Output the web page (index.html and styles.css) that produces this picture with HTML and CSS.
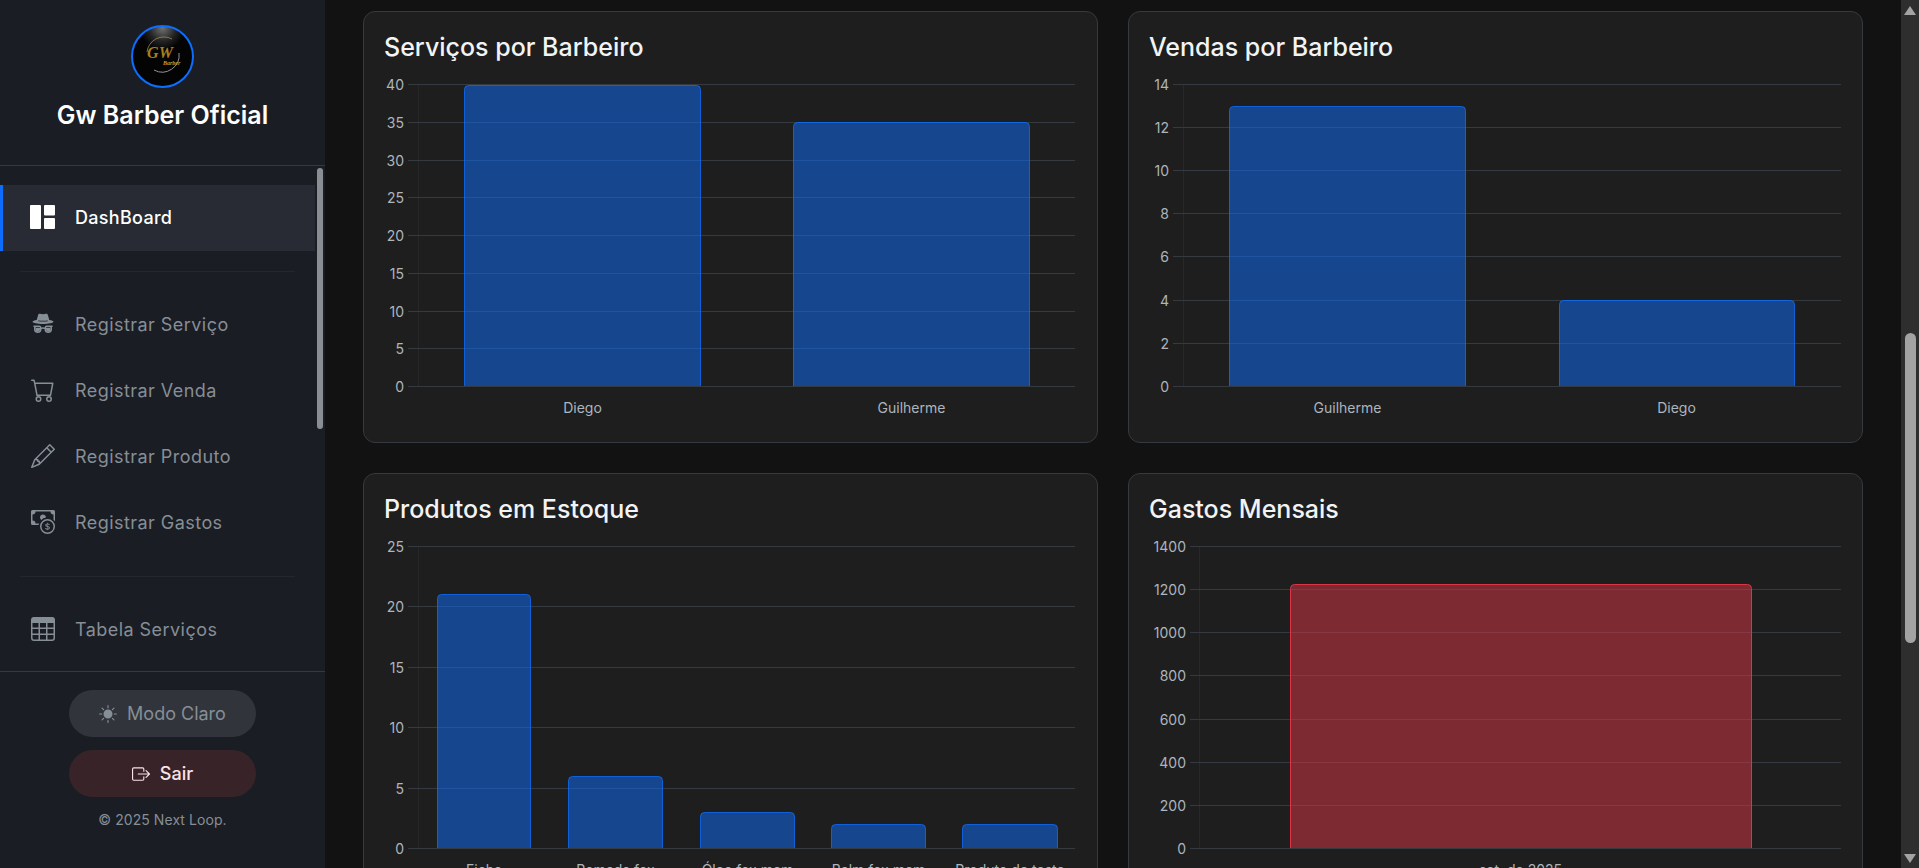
FILE: index.html
```html
<!DOCTYPE html>
<html lang="pt-BR">
<head>
<meta charset="utf-8">
<title>Gw Barber Oficial</title>
<link rel="stylesheet" href="styles.css">
</head>
<body>
<div class="app">
  <aside class="sidebar">
    <header class="brand">
      <svg class="logo" viewBox="0 0 63 63" width="63" height="63">
        <defs>
          <radialGradient id="glow" cx="50%" cy="3%" r="36%">
            <stop offset="0" stop-color="#737373"/>
            <stop offset="0.6" stop-color="#242424"/>
            <stop offset="1" stop-color="#040404"/>
          </radialGradient>
        </defs>
        <circle cx="31.5" cy="31.5" r="30.5" fill="url(#glow)" stroke="#0d6efd" stroke-width="2"/>
        <path d="M16 27a17 17 0 0 1 25-13" fill="none" stroke="#9c8a58" stroke-width=".8"/>
        <path d="M48 28a17 17 0 0 1-25 17" fill="none" stroke="#b5b5b5" stroke-width=".8"/>
        <text class="logo-gw" x="29" y="33">GW</text>
        <text class="logo-barber" x="32" y="40">Barber</text>
      </svg>
      <h1 class="brand-name">Gw Barber Oficial</h1>
    </header>

    <nav class="nav">
      <a class="nav-item active">
        <svg class="nav-icon" viewBox="0 0 25 24"><rect x="0" y="0" width="11" height="24" rx="1"/><rect x="14" y="0" width="11" height="10.5" rx="1"/><rect x="14" y="13" width="11" height="11" rx="1"/></svg>
        <span>DashBoard</span>
      </a>
      <hr class="nav-divider">
      <a class="nav-item">
        <svg class="nav-icon" viewBox="0 0 16 16"><path fill-rule="evenodd" d="m4.736 1.968-.892 3.269-.014.058C2.113 5.568 1 6.006 1 6.5 1 7.328 4.134 8 8 8s7-.672 7-1.5c0-.494-1.113-.932-2.83-1.205l-.014-.058-.892-3.27c-.146-.533-.698-.849-1.239-.734C9.411 1.363 8.62 1.5 8 1.5s-1.411-.136-2.025-.267c-.541-.115-1.093.2-1.239.735m.015 3.867a.25.25 0 0 1 .274-.224c.9.092 1.91.143 2.975.143a30 30 0 0 0 2.975-.143.25.25 0 0 1 .05.498c-.918.093-1.944.145-3.025.145s-2.107-.052-3.025-.145a.25.25 0 0 1-.224-.274M3.5 10h2a.5.5 0 0 1 .5.5v1a1.5 1.5 0 0 1-3 0v-1a.5.5 0 0 1 .5-.5m-1.5.5q.001-.264.085-.5H2a.5.5 0 0 1 0-1h3.5a1.5 1.5 0 0 1 1.488 1.312 3.5 3.5 0 0 1 2.024 0A1.5 1.5 0 0 1 10.5 9H14a.5.5 0 0 1 0 1h-.085q.084.236.085.5v1a2.5 2.5 0 0 1-5 0v-.14l-.21-.07a2.5 2.5 0 0 0-1.58 0l-.21.07v.14a2.5 2.5 0 0 1-5 0zm8.5-.5h2a.5.5 0 0 1 .5.5v1a1.5 1.5 0 0 1-3 0v-1a.5.5 0 0 1 .5-.5"/><path d="M3 10.5h3v1.2a1.5 1.5 0 0 1-3 0zM10 10.5h3v1.2a1.5 1.5 0 0 1-3 0z"/></svg>
        <span>Registrar Serviço</span>
      </a>
      <a class="nav-item">
        <svg class="nav-icon" viewBox="0 0 16 16"><path d="M0 1.5A.5.5 0 0 1 .5 1H2a.5.5 0 0 1 .485.379L2.89 3H14.5a.5.5 0 0 1 .491.592l-1.5 8A.5.5 0 0 1 13 12H4a.5.5 0 0 1-.491-.408L2.01 3.607 1.61 2H.5a.5.5 0 0 1-.5-.5M3.102 4l1.313 7h8.17l1.313-7zM5 12a2 2 0 1 0 0 4 2 2 0 0 0 0-4m7 0a2 2 0 1 0 0 4 2 2 0 0 0 0-4m-7 1a1 1 0 1 1 0 2 1 1 0 0 1 0-2m7 0a1 1 0 1 1 0 2 1 1 0 0 1 0-2"/></svg>
        <span>Registrar Venda</span>
      </a>
      <a class="nav-item">
        <svg class="nav-icon" viewBox="0 0 16 16"><path d="M12.146.146a.5.5 0 0 1 .708 0l3 3a.5.5 0 0 1 0 .708l-10 10a.5.5 0 0 1-.168.11l-5 2a.5.5 0 0 1-.65-.65l2-5a.5.5 0 0 1 .11-.168zM11.207 2.5 13.5 4.793 14.793 3.5 12.5 1.207zm1.586 3L10.5 3.207 4 9.707V10h.5a.5.5 0 0 1 .5.5v.5h.5a.5.5 0 0 1 .5.5v.5h.293zm-9.761 5.175-.106.106-1.528 3.821 3.821-1.528.106-.106A.5.5 0 0 1 5 12.5V12h-.5a.5.5 0 0 1-.5-.5V11h-.5a.5.5 0 0 1-.468-.325"/></svg>
        <span>Registrar Produto</span>
      </a>
      <a class="nav-item">
        <svg class="nav-icon" viewBox="0 0 16 16"><path fill-rule="evenodd" d="M11 15a4 4 0 1 0 0-8 4 4 0 0 0 0 8m5-4a5 5 0 1 1-10 0 5 5 0 0 1 10 0"/><path d="M9.438 11.944c.047.596.518 1.06 1.363 1.116v.44h.375v-.443c.875-.061 1.386-.529 1.386-1.207 0-.618-.39-.936-1.09-1.1l-.296-.07v-1.2c.376.043.614.248.671.532h.658c-.047-.575-.54-1.024-1.329-1.073V8.5h-.375v.45c-.747.073-1.255.522-1.255 1.158 0 .562.378.92 1.007 1.066l.248.061v1.272c-.384-.058-.639-.27-.696-.563h-.668zm1.36-1.354c-.369-.085-.569-.26-.569-.522 0-.294.216-.514.572-.578v1.1zm.432.746c.449.104.655.272.655.569 0 .339-.257.571-.709.614v-1.195z"/><path d="M1 0a1 1 0 0 0-1 1v8a1 1 0 0 0 1 1h4.083q.088-.517.258-1H3a2 2 0 0 0-2-2V3a2 2 0 0 0 2-2h10a2 2 0 0 0 2 2v3.528c.38.34.717.728 1 1.154V1a1 1 0 0 0-1-1z"/><path d="M9.998 5.083 10 5a2 2 0 1 0-3.132 1.65 6 6 0 0 1 3.13-1.567"/></svg>
        <span>Registrar Gastos</span>
      </a>
      <hr class="nav-divider">
      <a class="nav-item">
        <svg class="nav-icon" viewBox="0 0 16 16"><path d="M0 2a2 2 0 0 1 2-2h12a2 2 0 0 1 2 2v12a2 2 0 0 1-2 2H2a2 2 0 0 1-2-2zm15 2h-4v3h4zm0 4h-4v3h4zm0 4h-4v3h3a1 1 0 0 0 1-1zm-5 3v-3H6v3zm-5 0v-3H1v2a1 1 0 0 0 1 1zm-4-4h4V8H1zm0-4h4V4H1zm5-3v3h4V4zm4 4H6v3h4z"/></svg>
        <span>Tabela Serviços</span>
      </a>
      <div class="nav-thumb"></div>
    </nav>

    <footer class="side-footer">
      <button class="pill pill-theme">
        <svg class="pill-icon" viewBox="0 0 16 16"><path d="M12 8a4 4 0 1 1-8 0 4 4 0 0 1 8 0M8 0a.5.5 0 0 1 .5.5v2a.5.5 0 0 1-1 0v-2A.5.5 0 0 1 8 0m0 13a.5.5 0 0 1 .5.5v2a.5.5 0 0 1-1 0v-2A.5.5 0 0 1 8 13m8-5a.5.5 0 0 1-.5.5h-2a.5.5 0 0 1 0-1h2a.5.5 0 0 1 .5.5M3 8a.5.5 0 0 1-.5.5h-2a.5.5 0 0 1 0-1h2A.5.5 0 0 1 3 8m10.657-5.657a.5.5 0 0 1 0 .707l-1.414 1.415a.5.5 0 1 1-.707-.708l1.414-1.414a.5.5 0 0 1 .707 0m-9.193 9.193a.5.5 0 0 1 0 .707L3.05 13.657a.5.5 0 0 1-.707-.707l1.414-1.414a.5.5 0 0 1 .707 0m9.193 2.121a.5.5 0 0 1-.707 0l-1.414-1.414a.5.5 0 0 1 .707-.707l1.414 1.414a.5.5 0 0 1 0 .707M4.464 4.465a.5.5 0 0 1-.707 0L2.343 3.05a.5.5 0 1 1 .707-.707l1.414 1.414a.5.5 0 0 1 0 .708"/></svg>
        <span>Modo Claro</span>
      </button>
      <button class="pill pill-exit">
        <svg class="pill-icon" viewBox="0 0 16 16"><path fill-rule="evenodd" d="M10 12.5a.5.5 0 0 1-.5.5h-8a.5.5 0 0 1-.5-.5v-9a.5.5 0 0 1 .5-.5h8a.5.5 0 0 1 .5.5v2a.5.5 0 0 0 1 0v-2A1.5 1.5 0 0 0 9.5 2h-8A1.5 1.5 0 0 0 0 3.5v9A1.5 1.5 0 0 0 1.5 14h8a1.5 1.5 0 0 0 1.5-1.5v-2a.5.5 0 0 0-1 0z"/><path fill-rule="evenodd" d="M15.854 8.354a.5.5 0 0 0 0-.708l-3-3a.5.5 0 0 0-.708.708L14.293 7.5H5.5a.5.5 0 0 0 0 1h8.793l-2.147 2.146a.5.5 0 0 0 .708.708z"/></svg>
        <span>Sair</span>
      </button>
      <p class="copyright">© 2025 Next Loop.</p>
    </footer>
  </aside>

  <main class="main">
    <div class="charts">
      <section class="card">
        <h2 class="card-title">Serviços por Barbeiro</h2>
        <svg class="chart" viewBox="0 0 693 350">
          <path class="axis" d="M34.5 12V315"/>
          <path class="grid" d="M24 12.5H691M24 50.5H691M24 88.5H691M24 125.5H691M24 163.5H691M24 201.5H691M24 239.5H691M24 276.5H691M24 314.5H691"/>
          <text class="tick" x="20" y="18">40</text><text class="tick" x="20" y="56">35</text><text class="tick" x="20" y="94">30</text><text class="tick" x="20" y="131">25</text><text class="tick" x="20" y="169">20</text><text class="tick" x="20" y="207">15</text><text class="tick" x="20" y="245">10</text><text class="tick" x="20" y="282">5</text><text class="tick" x="20" y="320">0</text>
          <path class="bar" d="M80.5 314V17.5q0-4 4-4H312.5q4 0 4 4V314"/>
          <path class="bar" d="M409.5 314V54.5q0-4 4-4H641.5q4 0 4 4V314"/>
          <text class="cat" x="198.5" y="341">Diego</text>
          <text class="cat" x="527.5" y="341">Guilherme</text>
        </svg>
      </section>

      <section class="card">
        <h2 class="card-title">Vendas por Barbeiro</h2>
        <svg class="chart" viewBox="0 0 693 350">
          <path class="axis" d="M34.5 12V315"/>
          <path class="grid" d="M24 12.5H692M24 55.5H692M24 98.5H692M24 141.5H692M24 184.5H692M24 228.5H692M24 271.5H692M24 314.5H692"/>
          <text class="tick" x="20" y="18">14</text><text class="tick" x="20" y="61">12</text><text class="tick" x="20" y="104">10</text><text class="tick" x="20" y="147">8</text><text class="tick" x="20" y="190">6</text><text class="tick" x="20" y="234">4</text><text class="tick" x="20" y="277">2</text><text class="tick" x="20" y="320">0</text>
          <path class="bar" d="M80.5 314V38.5q0-4 4-4H312.5q4 0 4 4V314"/>
          <path class="bar" d="M410.5 314V232.5q0-4 4-4H641.5q4 0 4 4V314"/>
          <text class="cat" x="198.5" y="341">Guilherme</text>
          <text class="cat" x="527.5" y="341">Diego</text>
        </svg>
      </section>

      <section class="card">
        <h2 class="card-title">Produtos em Estoque</h2>
        <svg class="chart" viewBox="0 0 693 350">
          <path class="axis" d="M34.5 12V315"/>
          <path class="grid" d="M24 12.5H691M24 72.5H691M24 133.5H691M24 193.5H691M24 254.5H691M24 314.5H691"/>
          <text class="tick" x="20" y="18">25</text><text class="tick" x="20" y="78">20</text><text class="tick" x="20" y="139">15</text><text class="tick" x="20" y="199">10</text><text class="tick" x="20" y="260">5</text><text class="tick" x="20" y="320">0</text>
          <path class="bar" d="M53.5 314V64.5q0-4 4-4H142.5q4 0 4 4V314"/>
          <path class="bar" d="M184.5 314V246.5q0-4 4-4H274.5q4 0 4 4V314"/>
          <path class="bar" d="M316.5 314V282.5q0-4 4-4H406.5q4 0 4 4V314"/>
          <path class="bar" d="M447.5 314V294.5q0-4 4-4H537.5q4 0 4 4V314"/>
          <path class="bar" d="M578.5 314V294.5q0-4 4-4H669.5q4 0 4 4V314"/>
          <text class="cat" x="100" y="341">Ficha</text>
          <text class="cat" x="231.5" y="341">Pomada fox</text>
          <text class="cat" x="363.5" y="341">Óleo fox mem</text>
          <text class="cat" x="494.5" y="341">Balm fox mem</text>
          <text class="cat" x="626" y="341">Produto de teste</text>
        </svg>
      </section>

      <section class="card">
        <h2 class="card-title">Gastos Mensais</h2>
        <svg class="chart" viewBox="0 0 693 350">
          <path class="axis" d="M50.5 12V315"/>
          <path class="grid" d="M41 12.5H692M41 55.5H692M41 98.5H692M41 141.5H692M41 185.5H692M41 228.5H692M41 271.5H692M41 314.5H692"/>
          <text class="tick" x="37" y="18">1400</text><text class="tick" x="37" y="61">1200</text><text class="tick" x="37" y="104">1000</text><text class="tick" x="37" y="147">800</text><text class="tick" x="37" y="191">600</text><text class="tick" x="37" y="234">400</text><text class="tick" x="37" y="277">200</text><text class="tick" x="37" y="320">0</text>
          <path class="bar bar-red" d="M141.5 314V54.5q0-4 4-4H598.5q4 0 4 4V314"/>
          <text class="cat" x="371.5" y="341">set. de 2025</text>
        </svg>
      </section>
    </div>
  </main>

  <div class="scrollbar">
    <div class="arrow-box"><div class="arrow-up"></div></div>
    <div class="scroll-track"><div class="scroll-thumb"></div></div>
    <div class="arrow-box"><div class="arrow-down"></div></div>
  </div>
</div>
</body>
</html>
```

FILE: styles.css
```css
* { box-sizing: border-box; }

html, body {
  margin: 0;
  height: 100%;
  overflow: hidden;
}

body {
  font-family: Inter, "Noto Sans", sans-serif;
  background: #121212;
}

.app {
  display: flex;
  height: 100vh;
}

/* Sidebar */
.sidebar {
  flex: 0 0 325px;
  display: flex;
  flex-direction: column;
  background: #1a1d23;
}

.brand {
  display: flex;
  flex-direction: column;
  align-items: center;
  padding: 25px 0 35px;
  border-bottom: 1px solid #35383e;
}

.logo { display: block; }

.logo-gw {
  font: italic 700 16px "Liberation Serif", serif;
  fill: #a87d1e;
  text-anchor: middle;
}

.logo-barber {
  font: italic 700 6px "Liberation Serif", serif;
  fill: #c79a2c;
}

.brand-name {
  margin: 13px 0 0;
  font-size: 25px;
  line-height: 29px;
  font-weight: 600;
  color: #fff;
}

.nav {
  position: relative;
  flex: 1;
  min-height: 0;
  overflow: hidden;
  padding: 19px 10px 0 0;
}

.nav-item {
  display: flex;
  align-items: center;
  gap: 20px;
  height: 66px;
  padding: 0 0 2px 31px;
  font-size: 18px;
  letter-spacing: 0.45px;
  color: #868e96;
  fill: #868e96;
}

.nav-item.active {
  padding-left: 27px;
  border-left: 3px solid #0d6efd;
  background: #282b33;
  color: #fff;
  fill: #fff;
  font-weight: 500;
  letter-spacing: 0.3px;
}

.nav-icon {
  flex: none;
  width: 24px;
  height: 24px;
}

.nav-item.active .nav-icon { width: 25px; }

.nav-divider {
  height: 1px;
  margin: 20px 20px;
  border: 0;
  background: #24272d;
}

.nav-thumb {
  position: absolute;
  left: 317px;
  top: 2px;
  width: 6px;
  height: 261px;
  border-radius: 3px;
  background: #8a8d91;
}

.side-footer {
  display: flex;
  flex-direction: column;
  align-items: center;
  gap: 13px;
  padding-top: 18px;
  height: 197px;
  border-top: 1px solid #35383e;
}

.pill {
  display: flex;
  align-items: center;
  justify-content: center;
  gap: 10px;
  width: 187px;
  height: 47px;
  border: 0;
  border-radius: 24px;
  font-family: inherit;
  font-size: 18px;
}

.pill-icon {
  flex: none;
  width: 18px;
  height: 18px;
}

.pill-theme {
  background: #31343b;
  color: #868e96;
  fill: #868e96;
}

.pill-exit {
  background: #382329;
  color: #fbe4e6;
  fill: #fbe4e6;
  font-weight: 500;
}

.copyright {
  margin: 1px 0 0;
  font-size: 14px;
  letter-spacing: 0.06px;
  line-height: 18px;
  color: #868e96;
}

/* Main */
.main {
  flex: 1;
  min-width: 0;
  overflow: hidden;
  padding: 11px 38px 0;
}

.charts {
  display: grid;
  grid-template-columns: 1fr 1fr;
  gap: 30px;
}

.card {
  height: 432px;
  padding: 20px;
  background: #1e1e1e;
  border: 1px solid #343a40;
  border-radius: 12px;
}

.card-title {
  margin: 0 0 10px;
  padding-top: 1px;
  font-size: 25px;
  line-height: 29px;
  font-weight: 500;
  color: #f1f3f5;
}

.chart {
  display: block;
  width: 693px;
  height: 350px;
}

.grid {
  fill: none;
  stroke: #343a40;
  stroke-width: 1;
}

.axis {
  fill: none;
  stroke: #262829;
  stroke-width: 1;
}

.tick, .cat {
  font-family: Inter, sans-serif;
  font-size: 14px;
  fill: #adb5bd;
}

.tick { text-anchor: end; }
.cat { text-anchor: middle; }

.bar {
  fill: rgba(13, 110, 253, 0.5);
  stroke: rgba(13, 110, 253, 0.8);
  stroke-width: 1;
}

.bar-red {
  fill: rgba(220, 53, 69, 0.5);
  stroke: #dc3545;
}

/* Page scrollbar */
.scrollbar {
  flex: 0 0 18px;
  display: flex;
  flex-direction: column;
  background: #2e2e2e;
}

.arrow-box {
  flex: 0 0 17px;
  display: flex;
  align-items: center;
  justify-content: center;
}

.arrow-up, .arrow-down {
  width: 0;
  height: 0;
  border-left: 6.5px solid transparent;
  border-right: 6.5px solid transparent;
}

.arrow-up { border-bottom: 9px solid #a3a3a3; margin-top: 4px; }
.arrow-down { border-top: 9px solid #a3a3a3; margin-bottom: 2px; }

.scroll-track {
  flex: 1;
  padding: 316px 3px 0 4px;
}

.scroll-thumb {
  height: 310px;
  border-radius: 6px;
  background: #a3a3a3;
}
```
